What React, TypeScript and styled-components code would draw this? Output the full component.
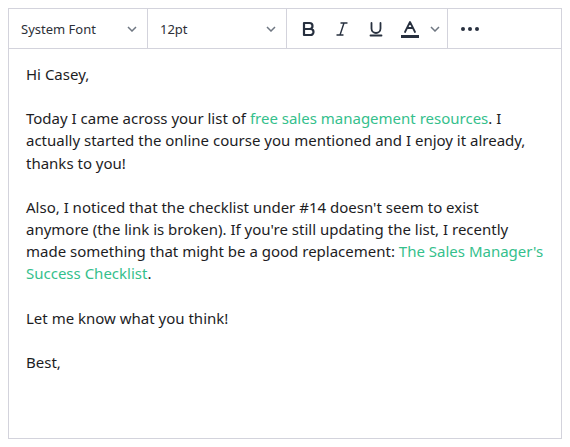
import React from 'react';
import styled, { createGlobalStyle } from 'styled-components';

const GlobalStyle = createGlobalStyle`
  body {
    margin: 8px;
    background: #fff;
    font-family: 'Noto Sans', 'Open Sans', sans-serif;
  }
`;

const Editor = styled.div`
  border: 1px solid #d3d3dc;
  height: 431px;
  box-sizing: border-box;
  display: flex;
  flex-direction: column;
  background: #fff;
`;

const Toolbar = styled.div`
  display: flex;
  height: 39px;
  border-bottom: 1px solid #d3d3dc;
`;

const Section = styled.div<{ $width?: number }>`
  display: flex;
  align-items: center;
  box-sizing: border-box;
  width: ${(p) => (p.$width ? `${p.$width}px` : 'auto')};
  flex: ${(p) => (p.$width ? 'none' : '1')};
  border-right: 1px solid #d3d3dc;
  &:last-child {
    border-right: none;
  }
`;

const Select = styled(Section)`
  justify-content: space-between;
  padding: 1px 10px 0 12px;
  font-size: 13px;
  color: #2c2f38;
`;

const Chevron = styled.svg`
  width: 10px;
  height: 6px;
  fill: none;
  stroke: #6f7782;
  stroke-width: 1.5;
`;

const FormatGroup = styled(Section)`
  padding-left: 15px;
`;

const IconButton = styled.button<{ $w: number }>`
  width: ${(p) => p.$w}px;
  height: 38px;
  padding: 0;
  border: none;
  background: none;
  display: flex;
  align-items: center;
  justify-content: flex-start;
  cursor: pointer;
  svg {
    fill: none;
    stroke: #27303f;
    stroke-width: 2.2;
    stroke-linecap: round;
    stroke-linejoin: round;
  }
`;

const MoreDots = styled.div`
  display: flex;
  gap: 3px;
  padding-left: 13px;
  span {
    width: 4px;
    height: 4px;
    border-radius: 50%;
    background: #27303f;
  }
`;

const Body = styled.div`
  padding: 14px 17px 0 17px;
  font-size: 15px;
  line-height: 22.15px;
  color: #1d1d1f;
`;

const Para = styled.p`
  margin: 0 0 22.15px;
`;

const Link = styled.a`
  color: #35c08c;
  text-decoration: none;
`;

const Down = () => (
  <Chevron viewBox="0 0 10 6">
    <path d="M1 1l4 4 4-4" />
  </Chevron>
);

export default function App() {
  return (
    <>
      <GlobalStyle />
      <Editor>
        <Toolbar>
          <Select $width={139}>
            System Font
            <Down />
          </Select>
          <Select $width={139}>
            12pt
            <Down />
          </Select>
          <FormatGroup $width={161}>
            <IconButton $w={34}>
              <svg width="14" height="16" viewBox="0 0 14 16">
                <path d="M2 2h5.5a3 3 0 0 1 0 6H2zM2 8h6.5a3 3 0 0 1 0 6H2z" />
              </svg>
            </IconButton>
            <IconButton $w={33}>
              <svg width="12" height="16" viewBox="0 0 12 16" style={{ strokeWidth: 1.4 }}>
                <path d="M5 2h6M1 14h6M8 2L4 14" />
              </svg>
            </IconButton>
            <IconButton $w={31}>
              <svg width="14" height="16" viewBox="0 0 14 16" style={{ strokeWidth: 1.8 }}>
                <path d="M2.5 2v5.5a4.5 4.5 0 0 0 9 0V2M1.5 14.5h11" />
              </svg>
            </IconButton>
            <IconButton $w={30}>
              <svg width="20" height="18" viewBox="0 0 20 18">
                <path d="M5 12L10 2l5 10M7 8h6" style={{ strokeWidth: 1.8 }} />
                <path d="M1 16.5h18" style={{ strokeWidth: 3, strokeLinecap: 'butt' }} />
              </svg>
            </IconButton>
            <Down />
          </FormatGroup>
          <Section>
            <MoreDots>
              <span />
              <span />
              <span />
            </MoreDots>
          </Section>
        </Toolbar>
        <Body>
          <Para>Hi Casey,</Para>
          <Para>
            Today I came across your list of <Link href="#">free sales management resources</Link>. I
            actually started the online course you mentioned and I enjoy it already, thanks to you!
          </Para>
          <Para>
            Also, I noticed that the checklist under #14 doesn't seem to exist anymore (the link is
            broken). If you're still updating the list, I recently made something that might be a
            good replacement: <Link href="#">The Sales Manager's Success Checklist</Link>.
          </Para>
          <Para>Let me know what you think!</Para>
          <Para>Best,</Para>
        </Body>
      </Editor>
    </>
  );
}
